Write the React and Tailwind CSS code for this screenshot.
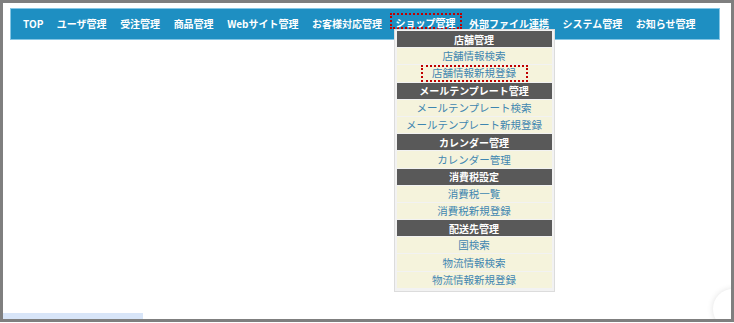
import React from 'react';

const navItems = ["TOP", "ユーザ管理", "受注管理", "商品管理", "Webサイト管理", "お客様対応管理", "ショップ管理", "外部ファイル連携", "システム管理", "お知らせ管理"];

const shopMenu = [
  { title: "店舗管理", items: ["店舗情報検索", "店舗情報新規登録"] },
  { title: "メールテンプレート管理", items: ["メールテンプレート検索", "メールテンプレート新規登録"] },
  { title: "カレンダー管理", items: ["カレンダー管理"] },
  { title: "消費税設定", items: ["消費税一覧", "消費税新規登録"] },
  { title: "配送先管理", items: ["国検索", "物流情報検索", "物流情報新規登録"] },
];

function ShopDropdown() {
  return (
    <div className="absolute left-[-2px] top-[16px] z-10 w-[161px] px-[2px] pt-[1px] pb-[3px] border border-[#dcdcdc] bg-[#f2f2f2] flex flex-col gap-[1px]">
      {shopMenu.map((group) => (
        <React.Fragment key={group.title}>
          <div className="h-[16.2px] bg-[#595959] text-white font-bold text-[10px] flex items-center justify-center">
            {group.title}
          </div>
          {group.items.map((item) => (
            <div key={item} className="h-[16.2px] bg-[#f5f3dc] text-[#3f86b0] text-[10.5px] flex items-center justify-center">
              {item === "店舗情報新規登録" ? (
                <span className="relative z-10 h-[17px] w-[107px] flex items-center justify-center border-2 border-dotted border-[#c00000] leading-none">{item}</span>
              ) : item}
            </div>
          ))}
        </React.Fragment>
      ))}
    </div>
  );
}

export default function App() {
  return (
    <div className="w-[734px] h-[323px] bg-white" style={{ fontFamily: '"Noto Sans CJK JP", "Liberation Sans", sans-serif' }}>
      <div className="relative w-[734px] h-[322px] border-[3px] border-[#7f7f7f] overflow-hidden pt-[5px] pl-[7px] pr-[11px]">
        {/* メニューバー */}
        <div className="h-[32px] bg-[#1e8fc2] border border-[#86c6e4] flex items-center pl-[12px] gap-[13.5px]">
          {navItems.map((label) =>
            label === "ショップ管理" ? (
              <div key={label} className="relative self-start mt-[4px]">
                <span className="-mx-[6px] px-[4px] h-[16px] flex items-end border-2 border-dotted border-[#c00000] text-white font-bold text-[10px] leading-[8px] whitespace-nowrap">
                  {label}
                </span>
                <ShopDropdown />
              </div>
            ) : (
              <span key={label} className="text-white font-bold text-[10px] leading-[12px] whitespace-nowrap">
                {label}
              </span>
            )
          )}
        </div>

        {/* ステータスバー */}
        <div className="absolute left-0 bottom-0 w-[140px] h-[6px] bg-[#d8e5f8]" />
        <div className="absolute right-[-22px] bottom-[-10px] w-[40px] h-[40px] rounded-full bg-white shadow-[0_0_6px_rgba(0,0,0,0.12)]" />
      </div>
    </div>
  );
}
